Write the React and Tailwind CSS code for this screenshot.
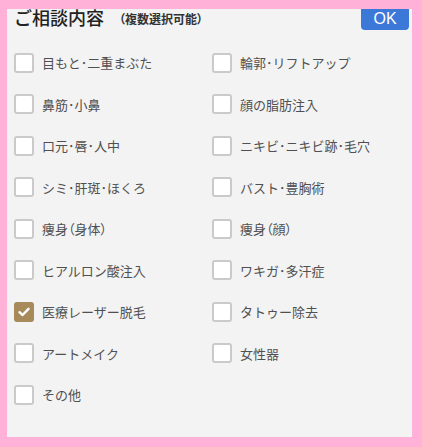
import React, { useState } from 'react';

const items = [
  '目もと･二重まぶた', '輪郭･リフトアップ',
  '鼻筋･小鼻', '顔の脂肪注入',
  '口元･唇･人中', 'ニキビ･ニキビ跡･毛穴',
  'シミ･肝斑･ほくろ', 'バスト･豊胸術',
  '痩身（身体）', '痩身（顔）',
  'ヒアルロン酸注入', 'ワキガ･多汗症',
  '医療レーザー脱毛', 'タトゥー除去',
  'アートメイク', '女性器',
  'その他',
];

// full-width parens, but packed tight like the original
function Tight({ text }) {
  return text.split(/([（）])/).map((part, i) =>
    part === '（' || part === '）' ? (
      <span key={i} className="[font-feature-settings:'palt']">{part}</span>
    ) : (
      part
    )
  );
}

function Check({ label, checked, onToggle }) {
  return (
    <label className="flex h-[41.5px] cursor-pointer items-center gap-[8px]" onClick={onToggle}>
      {checked ? (
        <span className="flex h-[20px] w-[20px] items-center justify-center rounded-[3px] bg-[#a88a5a]">
          <svg width="12" height="10" viewBox="0 0 12 10" fill="none">
            <path d="M1.5 5.2 L4.6 8 L10.5 1.8" stroke="#fff" strokeWidth="2.4" strokeLinecap="round" strokeLinejoin="round" />
          </svg>
        </span>
      ) : (
        <span className="h-[20px] w-[20px] rounded-[3px] border-2 border-[#cacaca] bg-white" />
      )}
      <span className="text-[13px] text-[#505050]"><Tight text={label} /></span>
    </label>
  );
}

export default function App() {
  const [sel, setSel] = useState({ '医療レーザー脱毛': true });
  const toggle = (k) => setSel((s) => ({ ...s, [k]: !s[k] }));

  return (
    <div
      className="h-[447px] w-[422px] bg-[#ffb1d8] pb-[10px] pl-[7px] pr-[10px] pt-[9px]"
      style={{ fontFamily: '"Noto Sans CJK JP", "Noto Sans", sans-serif' }}
    >
      <div className="h-full w-full overflow-hidden bg-[#f3f3f3] pl-[7px] pr-[3px]">
        <div className="-mt-[6px] flex h-[28px] items-center">
          <h2 className="text-[18px] font-medium leading-none text-[#222]">ご相談内容</h2>
          <span className="ml-[15px] mt-[3px] text-[12px] font-bold text-[#333]"><Tight text="（複数選択可能）" /></span>
          <button className="ml-auto h-[25px] w-[48px] rounded-[4px] bg-[#3b78d8] pt-[4px] text-[16px] leading-none text-white" style={{ fontFamily: '"Liberation Sans", sans-serif' }}>
            OK
          </button>
        </div>
        <div className="mt-[11px] grid grid-cols-[198px_1fr]">
          {items.map((it) => (
            <Check key={it} label={it} checked={!!sel[it]} onToggle={(e) => { e.preventDefault(); toggle(it); }} />
          ))}
        </div>
      </div>
    </div>
  );
}
